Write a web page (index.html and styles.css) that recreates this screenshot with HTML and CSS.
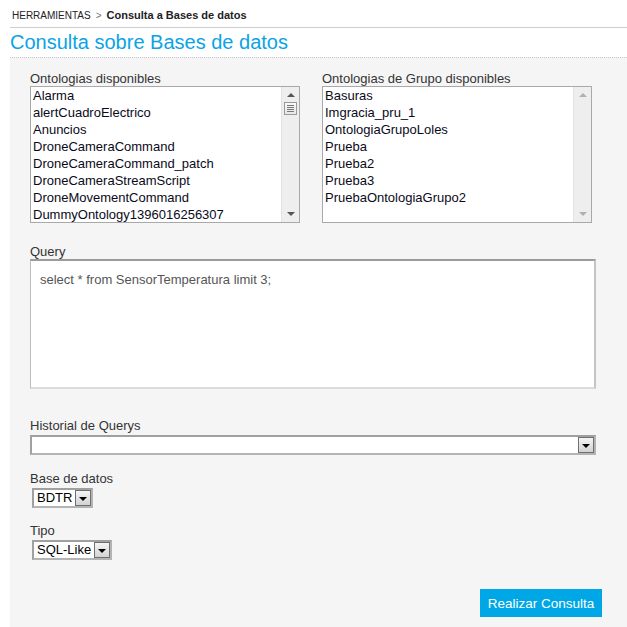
FILE: index.html
```html
<!DOCTYPE html>
<html lang="es">
<head>
<meta charset="utf-8">
<title>Consulta sobre Bases de datos</title>
<link rel="stylesheet" href="styles.css">
</head>
<body>
<div class="page">
  <div class="breadcrumb">
    <span class="crumb">HERRAMIENTAS</span><span class="sep">&gt;</span><span class="crumb-current">Consulta a Bases de datos</span>
  </div>
  <h1 class="title">Consulta sobre Bases de datos</h1>
  <div class="panel">
    <div class="lists">
      <div class="field">
        <div class="label">Ontologias disponibles</div>
        <div class="listbox">
          <ul class="items">
            <li>Alarma</li>
            <li>alertCuadroElectrico</li>
            <li>Anuncios</li>
            <li>DroneCameraCommand</li>
            <li>DroneCameraCommand_patch</li>
            <li>DroneCameraStreamScript</li>
            <li>DroneMovementCommand</li>
            <li>DummyOntology1396016256307</li>
          </ul>
          <div class="scrollbar">
            <span class="arrow-up"></span>
            <span class="thumb"><i></i><i></i><i></i><i></i></span>
            <span class="track"></span>
            <span class="arrow-down"></span>
          </div>
        </div>
      </div>
      <div class="field">
        <div class="label">Ontologias de Grupo disponibles</div>
        <div class="listbox">
          <ul class="items">
            <li>Basuras</li>
            <li>Imgracia_pru_1</li>
            <li>OntologiaGrupoLoles</li>
            <li>Prueba</li>
            <li>Prueba2</li>
            <li>Prueba3</li>
            <li>PruebaOntologiaGrupo2</li>
          </ul>
          <div class="scrollbar disabled">
            <span class="arrow-up"></span>
            <span class="track"></span>
            <span class="arrow-down"></span>
          </div>
        </div>
      </div>
    </div>

    <div class="label label-query">Query</div>
    <div class="query">select * from SensorTemperatura limit 3;</div>

    <div class="label label-hist">Historial de Querys</div>
    <div class="select select-full">
      <span class="select-value"></span>
      <span class="select-btn"><span class="tri"></span></span>
    </div>

    <div class="label label-db">Base de datos</div>
    <div class="select select-small select-db">
      <span class="select-value">BDTR</span>
      <span class="select-btn"><span class="tri"></span></span>
    </div>

    <div class="label label-tipo">Tipo</div>
    <div class="select select-small select-tipo">
      <span class="select-value">SQL-Like</span>
      <span class="select-btn"><span class="tri"></span></span>
    </div>

    <div class="actions">
      <button class="btn-primary" type="button">Realizar Consulta</button>
    </div>
  </div>
</div>
</body>
</html>
```
FILE: styles.css
```css
html, body {
  margin: 0;
  padding: 0;
  background: #ffffff;
  font-family: "Liberation Sans", Arial, sans-serif;
}

.page {
  padding-left: 10px;
}

.breadcrumb {
  padding: 9px 0 5px 2px;
  height: 13px;
  line-height: 13px;
  font-size: 11px;
  color: #222;
  border-bottom: 1px solid #cfcfcf;
}

.crumb {
  font-size: 10px;
}

.sep {
  color: #777;
  font-size: 10px;
  margin: 0 5px 0 5px;
}

.crumb-current {
  font-weight: bold;
}

.title {
  margin: 2px 0 3px 0;
  font-size: 20px;
  line-height: 24px;
  font-weight: normal;
  color: #0aa3e6;
}

.panel {
  background: #f5f5f5;
  border-top: 1px dotted #c8c8c8;
  padding: 13px 31px 12px 20px;
  min-height: 560px;
  box-sizing: border-box;
}

.label {
  font-size: 13px;
  line-height: 15px;
  color: #333;
}

.lists {
  display: grid;
  grid-template-columns: 270px 270px;
  column-gap: 22px;
}

.listbox {
  display: flex;
  height: 137px;
  box-sizing: border-box;
  border: 1px solid #a9a9a9;
  background: #fff;
  overflow: hidden;
}

.items {
  flex: 1;
  list-style: none;
  margin: 0;
  padding: 0 0 0 2px;
  font-size: 13px;
  line-height: 17px;
  color: #0a0a1a;
  white-space: nowrap;
  overflow: hidden;
}

.scrollbar {
  width: 17px;
  display: flex;
  flex-direction: column;
  align-items: center;
  background: #eeeeee;
  border-left: 1px solid #e2e2e2;
}

.arrow-up, .arrow-down {
  width: 0;
  height: 0;
  border-left: 4px solid transparent;
  border-right: 4px solid transparent;
  margin: 6px 0 5px 0;
}

.arrow-up {
  border-bottom: 4px solid #555;
}

.arrow-down {
  border-top: 4px solid #555;
  margin: 5px 0 6px 0;
}

.disabled .arrow-up {
  border-bottom-color: #b0b0b0;
}

.disabled .arrow-down {
  border-top-color: #b0b0b0;
}

.thumb {
  width: 13px;
  height: 13px;
  box-sizing: border-box;
  border: 1px solid #9a9a9a;
  background: linear-gradient(#fafafa, #e6e6e6);
  display: flex;
  flex-direction: column;
  justify-content: center;
  align-items: center;
  gap: 1px;
}

.thumb i {
  display: block;
  width: 7px;
  height: 1px;
  background: #777;
}

.track {
  flex: 1;
}

.label-query {
  margin-top: 21px;
}

.query {
  height: 130px;
  box-sizing: border-box;
  background: #fff;
  border-top: 2px solid #9b9b9b;
  border-left: 1px solid #bdbdbd;
  border-right: 2px solid #c4c4c4;
  border-bottom: 2px solid #dcdcdc;
  padding: 11px 9px;
  font-size: 13px;
  line-height: 15px;
  color: #555;
}

.label-hist {
  margin-top: 29px;
}

.select {
  display: flex;
  align-items: center;
  height: 20px;
  box-sizing: border-box;
  border: 2px solid #a8a8a8;
  border-color: #a0a0a0 #b4b4b4 #b4b4b4 #a0a0a0;
  background: #fff;
  margin-top: 2px;
}

.select-full {
  width: 566px;
}

.select-small {
  display: inline-flex;
  margin-left: 2px;
}

.select-db {
  width: 61px;
}

.select-tipo {
  width: 80px;
}

.select-value {
  flex: 1;
  font-size: 13px;
  line-height: 16px;
  color: #000;
  padding: 0 1px 0 3px;
  white-space: nowrap;
  overflow: hidden;
}

.select-btn {
  flex: none;
  width: 16px;
  height: 16px;
  box-sizing: border-box;
  border: 1px solid #6f6f6f;
  background: linear-gradient(#f5f5f5, #d2d2d2);
  display: flex;
  align-items: center;
  justify-content: center;
}

.tri {
  width: 0;
  height: 0;
  border-left: 4px solid transparent;
  border-right: 4px solid transparent;
  border-top: 4px solid #000;
  margin-top: 1px;
}

.label-db {
  margin-top: 16px;
}

.label-tipo {
  margin-top: 15px;
}

.actions {
  display: flex;
  justify-content: flex-end;
  margin-top: 29px;
}

.btn-primary {
  width: 122px;
  height: 28px;
  border: none;
  background: #00a7e6;
  color: #fff;
  font-family: "Liberation Sans", Arial, sans-serif;
  font-size: 13.5px;
  padding: 0;
  margin-right: -6px;
}
```
